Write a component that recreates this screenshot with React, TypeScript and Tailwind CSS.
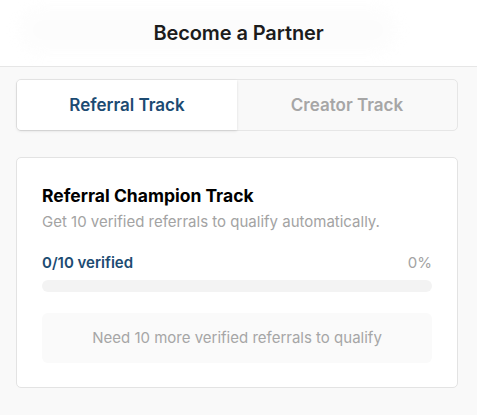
import React from "react";

const font = { fontFamily: "Inter, 'Noto Sans', sans-serif" };

export default function App() {
  return (
    <main style={font} className="min-h-screen w-full bg-[#f9f9f9] text-[#171717]">
      <header className="relative flex h-[67px] items-center justify-center overflow-hidden border-b border-[#e6e6e6] bg-white">
        <div className="pointer-events-none absolute left-[18px] top-[6px] h-[48px] w-[380px] rounded-[40px] bg-[#fafafa] opacity-40 blur-[6px]" />
        <h1 className="relative text-[20px] font-semibold tracking-[-0.1px] text-[#1c1c1c]">Become a Partner</h1>
      </header>

      <div className="flex flex-col pl-4 pr-[19px] pt-3">
        <div className="flex h-[52px] rounded-[5px] border border-[#e6e6e6] bg-[#f9f9f9]">
          <button className="flex w-1/2 items-center justify-center rounded-l-[4px] bg-white pt-[2px] text-[17px] font-semibold text-[#1c4b72] shadow-[0_1px_3px_rgba(0,0,0,0.12)]">
            Referral Track
          </button>
          <button className="flex w-1/2 items-center justify-center pt-[2px] text-[17px] font-semibold text-[#a6a6a6]">
            Creator Track
          </button>
        </div>

        <section className="mt-[26px] rounded-[5px] border border-[#e3e3e3] bg-white px-[25px] py-6">
          <h2 className="text-[17.5px] font-bold leading-7 text-black">Referral Champion Track</h2>
          <p className="mt-px text-[15px] leading-[22px] text-[#a3a3a3]">Get 10 verified referrals to qualify automatically.</p>

          <div className="mt-[19px] flex items-center justify-between text-[15px] leading-[22px]">
            <span className="font-semibold text-[#1c4b72]">0/10 verified</span>
            <span className="text-[#a3a3a3]">0%</span>
          </div>
          <div className="mt-[6px] h-3 w-full rounded-full bg-[#f3f3f3]">
            <div className="h-3 rounded-full bg-[#1c4b72]" style={{ width: "0%" }} />
          </div>

          <div className="mt-[21px] flex h-[50px] items-center justify-center rounded-md bg-[#fafafa] text-[15px] text-[#a6a6a6]">
            Need 10 more verified referrals to qualify
          </div>
        </section>
      </div>
    </main>
  );
}
